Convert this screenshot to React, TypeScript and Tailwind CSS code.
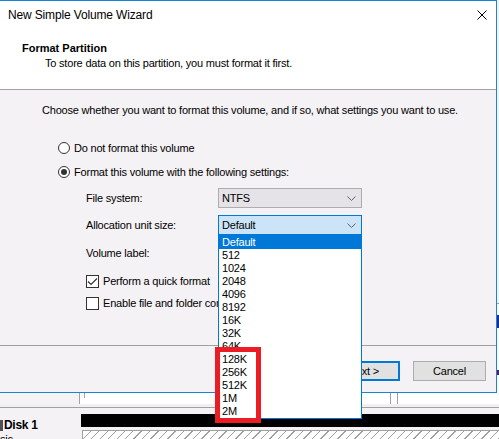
import React from "react";

const items = ["Default", "512", "1024", "2048", "4096", "8192", "16K", "32K", "64K", "128K", "256K", "512K", "1M", "2M"];

function Chevron() {
  return (
    <svg width="9" height="5" viewBox="0 0 9 5" className="shrink-0">
      <path d="M0.5 0.5 L4.5 4.5 L8.5 0.5" fill="none" stroke="#606060" strokeWidth="1" />
    </svg>
  );
}

function Radio({ checked }: { checked?: boolean }) {
  return (
    <div className="w-[12px] h-[12px] rounded-full border border-[#333333] bg-white flex items-center justify-center shrink-0">
      {checked && <div className="w-[6px] h-[6px] rounded-full bg-[#333333]" />}
    </div>
  );
}

function Check({ checked }: { checked?: boolean }) {
  return (
    <div className="w-[13px] h-[13px] border border-[#333333] bg-white shrink-0 flex items-center justify-center">
      {checked && (
        <svg width="11" height="11" viewBox="0 0 11 11">
          <path d="M1 5.5 L4 8.5 L10 2.5" fill="none" stroke="#333333" strokeWidth="1.2" />
        </svg>
      )}
    </div>
  );
}

export default function App() {
  return (
    <div className="w-[499px] h-[439px] overflow-hidden bg-[#f4f2f5] flex flex-col font-['Liberation_Sans',Arial,sans-serif] text-[11px] tracking-[-0.2px] text-black leading-[13px]">
      <div className="flex h-[393px] shrink-0">
        {/* Dialog */}
        <div className="w-[497px] h-[393px] shrink-0 border-t border-r border-b border-[#1883d7] bg-[#f4f2f5] flex flex-col">
          {/* Header */}
          <div className="h-[89px] shrink-0 bg-white border-b border-[#a0a0a0] flex flex-col">
            <div className="h-[28px] flex items-center justify-between pl-[8px] pr-[9px]">
              <span className="text-[12px] tracking-[-0.15px]">New Simple Volume Wizard</span>
              <svg width="10" height="10" viewBox="0 0 10 10">
                <path d="M0.5 0.5 L9.5 9.5 M9.5 0.5 L0.5 9.5" stroke="#000" strokeWidth="1" />
              </svg>
            </div>
            <div className="mt-[13px] pl-[22px] font-bold tracking-[0px]">Format Partition</div>
            <div className="mt-[2px] pl-[45px]">To store data on this partition, you must format it first.</div>
          </div>

          {/* Body */}
          <div className="flex flex-col">
            <div className="mt-[14px] pl-[42px]">
              Choose whether you want to format this volume, and if so, what settings you want to use.
            </div>
            <div className="mt-[24px] h-[14px] pl-[58px] flex items-center gap-[4px]">
              <Radio />
              <span>Do not format this volume</span>
            </div>
            <div className="mt-[10px] h-[14px] pl-[58px] flex items-center gap-[4px]">
              <Radio checked />
              <span>Format this volume with the following settings:</span>
            </div>
            <div className="mt-[9px] h-[20px] flex items-center">
              <div className="w-[218px] pl-[86px] shrink-0">File system:</div>
              <div className="w-[144px] h-[20px] border border-[#adadad] bg-[#e5e3e7] flex items-center justify-between pl-[3px] pr-[5px]">
                <span>NTFS</span>
                <Chevron />
              </div>
            </div>
            <div className="mt-[7px] h-[20px] flex items-center">
              <div className="w-[218px] pl-[86px] shrink-0">Allocation unit size:</div>
              <div className="relative w-[144px] h-[20px] border border-[#0078d7] bg-[#cce4f7] flex items-center justify-between pl-[3px] pr-[5px]">
                <span>Default</span>
                <Chevron />
                {/* Dropdown list */}
                <div className="absolute z-10 left-[-1px] top-[19px] w-[144px] h-[184px] border border-[#0078d7] bg-white flex flex-col">
                  {items.map((it, i) => (
                    <div
                      key={it}
                      className={
                        i === 0
                          ? "h-[13px] leading-[13px] pl-[3px] bg-[#0078d7] text-white"
                          : "h-[13px] leading-[13px] pl-[3px]"
                      }
                    >
                      {it}
                    </div>
                  ))}
                  <div className="absolute left-[-4px] top-[111px] w-[46px] h-[76px] border-[5px] border-[#ec1c24]" />
                </div>
              </div>
            </div>
            <div className="mt-[8px] h-[20px] flex items-center">
              <div className="w-[218px] pl-[86px] shrink-0">Volume label:</div>
              <div className="w-[144px] h-[20px] border border-[#7a7a7a] bg-white" />
            </div>
            <div className="mt-[12px] h-[13px] pl-[86px] flex items-center gap-[4px]">
              <Check checked />
              <span>Perform a quick format</span>
            </div>
            <div className="mt-[9px] h-[13px] pl-[86px] flex items-center gap-[4px]">
              <Check />
              <span>Enable file and folder compression</span>
            </div>
            <div className="mt-[35px] h-px bg-[#a0a0a0]" />
            <div className="mt-[15px] h-[20px] flex justify-end pr-[10px]">
              <div className="w-[73px] h-[20px] border border-[#adadad] bg-[#e1e1e1] flex items-center justify-center">
                &lt; Back
              </div>
              <div className="w-[73px] h-[20px] border-2 border-[#0078d7] bg-[#e1e1e1] flex items-center justify-center">
                Next &gt;
              </div>
              <div className="ml-[13px] w-[73px] h-[20px] border border-[#adadad] bg-[#e1e1e1] flex items-center justify-center">
                Cancel
              </div>
            </div>
          </div>
        </div>
        {/* sliver of window behind */}
        <div className="flex-1 flex flex-col">
          <div className="h-[303px] bg-[#f4f2f5]" />
          <div className="h-px bg-[#a0a0a0]" />
          <div className="h-[11px] bg-white" />
          <div className="h-[13px] bg-[#1c2b8c]" />
          <div className="h-[42px] bg-white" />
          <div className="h-[5px] bg-[#5a1f4a]" />
          <div className="flex-1 bg-white" />
        </div>
      </div>

      {/* Background: Disk Management */}
      <div className="flex-1 flex flex-col">
        <div className="h-[11px] flex shrink-0">
          <div className="w-[79px] bg-[#f4f2f5]" />
          <div className="w-px bg-[#a0a0a0]" />
          <div className="flex-1 bg-white flex">
            <div className="ml-[4px] w-px h-[5px] bg-[#a0a0a0]" />
            <div className="ml-[305px] w-px bg-[#a0a0a0]" />
            <div className="ml-[6px] w-px bg-[#a0a0a0]" />
          </div>
        </div>
        <div className="h-[3px] bg-[#f0f0f0] shrink-0" />
        <div className="h-px bg-[#a0a0a0] shrink-0" />
        <div className="flex-1 flex">
          <div className="w-[81px] shrink-0 flex flex-col overflow-hidden">
            <div className="mt-[11px] h-[12px] flex items-center gap-[1px]">
              <div className="w-[3px] h-[11px] bg-[#505050]" />
              <span className="text-[12px] font-bold tracking-[-0.3px] leading-[12px]">Disk 1</span>
            </div>
            <div className="mt-[3px] ml-[-13px] text-[11px] leading-[11px]">Basic</div>
          </div>
          <div className="flex-1 flex flex-col">
            <div className="mt-[6px] h-[13px] bg-black" />
            <div className="h-[3px] bg-[#f4f2f5]" />
            <div className="flex-1 ml-px border-l border-t border-[#a0a0a0] bg-[repeating-linear-gradient(135deg,#ffffff_0px,#ffffff_5px,#a0a0a0_5px,#a0a0a0_6px)]" />
          </div>
        </div>
      </div>
    </div>
  );
}
